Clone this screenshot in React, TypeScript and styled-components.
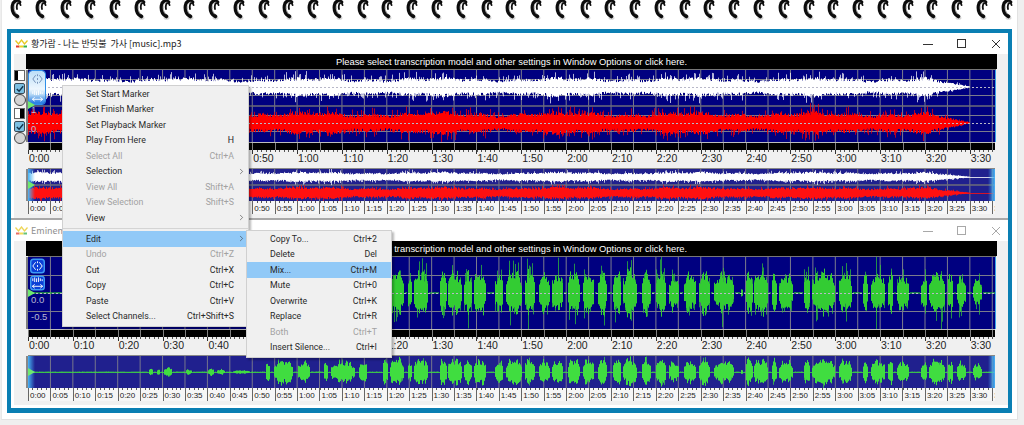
import { FC } from 'react';
import styled, { createGlobalStyle } from 'styled-components';
import { ChevronRight } from 'lucide-react';

const PLOT_WIDTH = 967;
const SEC_PX = 4.485;
const UI_FONT = `"Liberation Sans", "Noto Sans CJK KR", sans-serif`;

type Envelope = (x: number) => number;

const random = (seed: number) => () => {
    seed = (seed + 0x6d2b79f5) | 0;
    let t = Math.imul(seed ^ (seed >>> 15), 1 | seed);
    t = (t + Math.imul(t ^ (t >>> 7), 61 | t)) ^ t;
    return ((t ^ (t >>> 14)) >>> 0) / 4294967296;
};

// x ranges read off the screenshot, [from, to, level]
const SONG_BURSTS: [number, number, number][] = [
    [148, 153, .3], [156, 160, .25], [163, 172, .35], [185, 192, .2], [207, 214, .3], [216, 225, .2], [232, 250, .13],
    [265, 270, .8], [273, 293, 1], [297, 310, .75], [323, 328, .8], [330, 355, .85], [358, 367, .8], [382, 388, 1],
    [389, 404, 1], [407, 412, .7], [413, 428, 1], [439, 447, 1], [447, 462, 1], [463, 472, .9], [473, 486, 1],
    [494, 503, .85], [505, 522, 1], [524, 535, 1], [538, 550, .9], [551, 563, .9], [567, 580, 1], [582, 594, .95],
    [597, 607, 1], [612, 621, 1], [622, 637, 1.05], [641, 651, 1], [655, 666, 1], [668, 679, .8], [683, 696, .9],
    [698, 710, 1], [713, 734, .85], [740, 743, .2], [745, 753, 1], [753, 768, 1], [771, 777, .9], [778, 793, .85],
    [803, 810, .9], [811, 835, 1], [838, 852, .9], [862, 868, .85], [870, 885, .9], [887, 893, .9], [896, 909, .8],
    [920, 927, .7], [928, 945, 1], [947, 953, .85], [956, 966, .75], [972, 982, .6],
];

const songEnvelope: Envelope = (x) => {
    const px = x + 28;
    for (const [from, to, level] of SONG_BURSTS) {
        if (px >= from && px <= to) {
            const t = (px - from) / (to - from);
            const ripple = .66 + .34 * Math.abs(Math.sin(px * .83) * Math.cos(px * .37));
            return level * Math.pow(Math.sin(Math.PI * t), .4) * ripple;
        }
    }
    return .02;
};

const musicEnvelope: Envelope = (x) => {
    const body = .82 + .12 * Math.sin(x * .05) + .08 * Math.sin(x * .17);
    if (x < 900) return body;
    if (x < 942) return body * (1 - (x - 900) / 42) * .9 + .04;
    return 0;
};

const bars = (center: number, env: Envelope, amp: number, seed: number) => {
    const rnd = random(seed);
    let d = '';
    for (let x = 0; x < PLOT_WIDTH; x += 1) {
        const up = env(x) * amp * (.7 + rnd() * .4);
        const down = env(x) * amp * (.7 + rnd() * .4);
        if (up + down > .2) d += `M${x + .5} ${(center - up).toFixed(1)}V${(center + down).toFixed(1)}`;
    }
    return d;
};

const spikes = (center: number, env: Envelope, amp: number, seed: number) => {
    const rnd = random(seed);
    let d = '';
    for (let x = 0; x < PLOT_WIDTH; x += 1) {
        const r1 = rnd();
        const r2 = rnd();
        const up = env(x) * amp * (.3 + Math.pow(r1, 4) * .8 + r2 * .12);
        const down = env(x) * amp * (.3 + Math.pow(r2, 4) * .8 + r1 * .12);
        if (up + down > .4) d += `M${x + .5} ${(center - up).toFixed(1)}V${(center + down).toFixed(1)}`;
    }
    return d;
};

type Channel = {
    center: number;
    env: Envelope;
    color: string;
    core: number;
    spike: number;
    seed: number;
    lines?: number;
};

const PlotGraph: FC<{ height: number; channels: Channel[]; step: number; divider?: number; grid: string; dotted?: boolean }> = ({ height, channels, step, divider, grid, dotted }) => {
    const verticals: number[] = [];
    for (let x = step; x < PLOT_WIDTH; x += step) verticals.push(x);
    return (
        <svg width={PLOT_WIDTH} height={height} style={{ display: 'block' }}>
            {verticals.map((x) => <line key={x} x1={x} x2={x} y1={0} y2={height} stroke={grid} />)}
            {channels.map((c) => c.lines ? (
                <g key={c.seed} stroke={grid}>
                    <line x1={0} x2={PLOT_WIDTH} y1={c.center - c.lines + .5} y2={c.center - c.lines + .5} />
                    <line x1={0} x2={PLOT_WIDTH} y1={c.center + c.lines + .5} y2={c.center + c.lines + .5} />
                </g>
            ) : null)}
            {divider ? <line x1={0} x2={PLOT_WIDTH} y1={divider} y2={divider} stroke="#6c6c78" strokeWidth={1.5} /> : null}
            {channels.map((c) => (
                <g key={c.seed} stroke={c.color} fill="none">
                    <path d={spikes(c.center, c.env, c.spike, c.seed + 7)} opacity={.7} />
                    <path d={bars(c.center, c.env, c.core, c.seed)} />
                    {dotted
                        ? <line x1={0} x2={PLOT_WIDTH} y1={c.center + .5} y2={c.center + .5} stroke="#b8b8c8" strokeDasharray="2 2" />
                        : <line x1={0} x2={PLOT_WIDTH} y1={c.center + .5} y2={c.center + .5} opacity={.8} />}
                </g>
            ))}
        </svg>
    );
};

const ZoomGlyph: FC<{ wash?: boolean; kind: 'h' | 'v' }> = ({ wash, kind }) => (
    <svg width="15" height="16" viewBox="0 0 16 16" style={{ display: 'block' }}>
        {!wash && <rect x=".75" y=".75" width="14.5" height="14.5" rx="3" fill="#0b3fd6" stroke="#3d9bf5" strokeWidth="1.5" />}
        {kind === 'h' ? (
            <g stroke={wash ? '#6f8db4' : '#fff'} strokeWidth="1" fill="none">
                <path d="M6 4 3 8l3 4M10 4l3 4-3 4" />
                <path d="M8 3v2M8 7v2M8 11v2" />
            </g>
        ) : (
            <g stroke="#fff" strokeWidth="1" fill="none">
                <path d="M3 3v3M5 2v5M7 3v4M9 2v5M11 3v3M13 4v2" />
                <path d="M2.5 11.5h11M5 9.5l-2.5 2 2.5 2M11 9.5l2.5 2-2.5 2" />
            </g>
        )}
    </svg>
);

const Crown: FC<{ dim?: boolean }> = ({ dim }) => (
    <svg width="13" height="10" viewBox="0 0 13 10" style={{ display: 'block', opacity: dim ? .75 : 1 }}>
        <path d="M.5 1.5 3.5 5 6.5 1l3 4 3-3.5" fill="none" stroke="#e8c820" strokeWidth="1.3" />
        <path d="M1 7.5h3.5" stroke="#e23b2e" strokeWidth="2" />
        <path d="M4.5 7.5h4" stroke="#f0d020" strokeWidth="2" />
        <path d="M8.5 7.5H12" stroke="#35b04a" strokeWidth="2" />
    </svg>
);

const Ring: FC = () => (
    <svg width="13" height="20" viewBox="0 0 13 20" style={{ display: 'block', flex: 'none' }}>
        <ellipse cx="7.5" cy="18" rx="3" ry="1.8" fill="#d6d6d6" />
        <path d="M9.4 2.2C6.2.2 3 1.4 2.6 5.6c-.5 4.2.8 8.6 4.8 10.8" fill="none" stroke="#0c0c0c" strokeWidth="3.8" strokeLinecap="round" />
        <path d="M8.6 2.4C6.4 1.8 4.7 3.2 4.3 6c-.4 3 .3 6.2 2.4 8.2" fill="none" stroke="#dcdcdc" strokeWidth=".8" />
        <path d="M7 9c-.7-3.2.1-5.8 1.8-5.8 1 0 1.6.7 1.8 2" fill="none" stroke="#111" strokeWidth="1.8" strokeLinecap="round" />
    </svg>
);

type MenuRow = { label: string; keys?: string; off?: boolean; sub?: boolean; on?: boolean };

const MAIN_TOP: MenuRow[] = [
    { label: 'Set Start Marker' },
    { label: 'Set Finish Marker' },
    { label: 'Set Playback Marker' },
    { label: 'Play From Here', keys: 'H' },
    { label: 'Select All', keys: 'Ctrl+A', off: true },
    { label: 'Selection', sub: true },
    { label: 'View All', keys: 'Shift+A', off: true },
    { label: 'View Selection', keys: 'Shift+S', off: true },
    { label: 'View', sub: true },
];

const MAIN_BOTTOM: MenuRow[] = [
    { label: 'Edit', sub: true, on: true },
    { label: 'Undo', keys: 'Ctrl+Z', off: true },
    { label: 'Cut', keys: 'Ctrl+X' },
    { label: 'Copy', keys: 'Ctrl+C' },
    { label: 'Paste', keys: 'Ctrl+V' },
    { label: 'Select Channels...', keys: 'Ctrl+Shift+S' },
];

const EDIT_ROWS: MenuRow[] = [
    { label: 'Copy To...', keys: 'Ctrl+2' },
    { label: 'Delete', keys: 'Del' },
    { label: 'Mix...', keys: 'Ctrl+M', on: true },
    { label: 'Mute', keys: 'Ctrl+0' },
    { label: 'Overwrite', keys: 'Ctrl+K' },
    { label: 'Replace', keys: 'Ctrl+R' },
    { label: 'Both', keys: 'Ctrl+T', off: true },
    { label: 'Insert Silence...', keys: 'Ctrl+I' },
];

const MenuRows: FC<{ rows: MenuRow[] }> = ({ rows }) => (
    <>
        {rows.map((r) => (
            <MenuItem key={r.label} $off={r.off} $on={r.on}>
                <span>{r.label}</span>
                <MenuKeys>{r.keys}</MenuKeys>
                <MenuArrow>{r.sub ? <ChevronRight size={9} strokeWidth={1.5} /> : null}</MenuArrow>
            </MenuItem>
        ))}
    </>
);

const timeLabel = (sec: number) => `${Math.floor(sec / 60)}:${String(sec % 60).padStart(2, '0')}`;

const MAJOR = Array.from({ length: 22 }, (_, i) => timeLabel(i * 10));
const MINOR = Array.from({ length: 44 }, (_, i) => timeLabel(i * 5));

const Controls: FC<{ left: boolean }> = ({ left }) => (
    <ControlGroup>
        <Swatch $left={left} />
        <CheckBox>
            <svg width="10" height="10" viewBox="0 0 11 11" style={{ display: 'block' }}><path d="M2 5.5 4.5 8 9 2.5" fill="none" stroke="#12324a" strokeWidth="1.5" /></svg>
        </CheckBox>
        <Radio />
    </ControlGroup>
);

type TrackProps = {
    title: string;
    dim?: boolean;
    controls?: boolean;
    main: Channel[];
    over: Channel[];
    divider?: number;
    overDivider?: number;
    music?: boolean;
};

const Track: FC<TrackProps> = ({ title, dim, controls, main, over, divider, overDivider, music }) => (
    <Window>
        <TitleBar $dim={dim}>
            <Crown dim={dim} />
            <TitleText>{title}</TitleText>
            <WindowButtons $dim={dim}>
                <svg width="10" height="10" viewBox="0 0 10 10"><path d="M0 5.5h10" stroke="currentColor" /></svg>
                <svg width="10" height="10" viewBox="0 0 10 10"><rect x=".5" y=".5" width="8" height="8" fill="none" stroke="currentColor" /></svg>
                <svg width="10" height="10" viewBox="0 0 10 10"><path d="M1 1l8 8M9 1 1 9" stroke="currentColor" /></svg>
            </WindowButtons>
        </TitleBar>
        <WindowBody>
            <SideColumn>
                {controls ? (
                    <>
                        <Controls left />
                        <Controls left={false} />
                    </>
                ) : null}
            </SideColumn>
            <MainColumn>
                <Banner>Please select transcription model and other settings in Window Options or click here.</Banner>
                <Plot>
                    <PlotGraph height={72} channels={main} step={SEC_PX * 5} divider={divider} grid="#7b7b8c" dotted />
                    {music ? (
                        <WashPanel>
                            <ZoomGlyph wash kind="h" />
                            <ZoomGlyph wash kind="v" />
                        </WashPanel>
                    ) : (
                        <ButtonStack>
                            <ZoomGlyph kind="h" />
                            <ZoomGlyph kind="v" />
                        </ButtonStack>
                    )}
                    <PlayHead $top={music ? 31 : 32} />
                    {music ? (
                        <>
                            <AxisLabel $top={35}>1</AxisLabel>
                            <AxisLabel $top={54}>0</AxisLabel>
                        </>
                    ) : (
                        <>
                            <AxisLabel $top={38}>0.0</AxisLabel>
                            <AxisLabel $top={55}>-0.5</AxisLabel>
                        </>
                    )}
                </Plot>
                <BlackBand />
                <MajorRuler>
                    {MAJOR.map((t) => <MajorLabel key={t}>{t}</MajorLabel>)}
                </MajorRuler>
                <Overview>
                    <PlotGraph height={32} channels={over} step={SEC_PX * 5} divider={overDivider} grid="#76768c" />
                    <EdgeFade $side="left" />
                    <EdgeFade $side="right" />
                    <PlayHead $top={12} />
                </Overview>
                <MinorRuler>
                    {MINOR.map((t) => <MinorLabel key={t}>{t}</MinorLabel>)}
                </MinorRuler>
            </MainColumn>
        </WindowBody>
    </Window>
);

export default function App() {
    return (
        <>
            <GlobalStyle />
            <Sheet>
                <RingRow>
                    {Array.from({ length: 41 }, (_, i) => <Ring key={i} />)}
                </RingRow>
                <Frame>
                    <Track
                        title="황가람 - 나는 반딧불  가사 [music].mp3"
                        controls
                        music
                        divider={36}
                        overDivider={16}
                        main={[
                            { center: 17, env: musicEnvelope, color: '#ffffff', core: 9.5, spike: 15, seed: 11, lines: 8 },
                            { center: 53, env: musicEnvelope, color: '#ff0000', core: 11, spike: 17, seed: 23, lines: 8 },
                        ]}
                        over={[
                            { center: 8, env: musicEnvelope, color: '#ffffff', core: 5, spike: 7, seed: 31 },
                            { center: 24, env: musicEnvelope, color: '#ff1010', core: 6, spike: 8, seed: 37 },
                        ]}
                    />
                    <Separator />
                    <Track
                        title="Eminem"
                        dim
                        main={[{ center: 36, env: songEnvelope, color: '#33cc33', core: 25, spike: 40, seed: 41, lines: 18 }]}
                        over={[{ center: 16, env: songEnvelope, color: '#40dd40', core: 15, spike: 15, seed: 43 }]}
                    />
                    <MenuPanel $left={51} $top={52} $width={187}>
                        <MenuRows rows={MAIN_TOP} />
                        <MenuDivider />
                        <MenuRows rows={MAIN_BOTTOM} />
                    </MenuPanel>
                    <MenuPanel $left={235} $top={197} $width={146}>
                        <MenuRows rows={EDIT_ROWS} />
                    </MenuPanel>
                </Frame>
            </Sheet>
        </>
    );
}

const GlobalStyle = createGlobalStyle`
    html, body {
        margin: 0;
        padding: 0;
        background: #efefef;
        overflow: hidden;
    }
    body {
        width: 1024px;
        height: 425px;
        font-family: ${UI_FONT};
    }
`;

const Sheet = styled.div`
    position: relative;
    box-sizing: border-box;
    width: 1017px;
    height: 420px;
    margin-left: 1px;
    padding: 29px 5px 0 5px;
    background: #fff;
    border-right: 1px solid #e2e2e2;
    border-bottom: 1px solid #e2e2e2;
    border-left: 1px solid #e8e8e8;
`;

const RingRow = styled.div`
    position: absolute;
    top: 0;
    left: 8px;
    display: flex;
    gap: 11.78px;
`;

const Frame = styled.div`
    position: relative;
    box-sizing: border-box;
    width: 1005px;
    height: 384px;
    background: #fff;
    border: 4px solid #0a7fb3;
    border-bottom-width: 5px;
`;

const Window = styled.div`
    background: #fff;
`;

const Separator = styled.div`
    height: 2px;
    background: #a8a8a8;
`;

const TitleBar = styled.div<{ $dim?: boolean }>`
    display: flex;
    align-items: center;
    height: 21px;
    padding-left: 4px;
    color: ${(p) => (p.$dim ? '#8e8e8e' : '#222')};
`;

const TitleText = styled.div`
    margin-left: 3px;
    font-family: "Noto Sans CJK KR", "Liberation Sans", sans-serif;
    font-size: 9px;
    white-space: pre;
`;

const WindowButtons = styled.div<{ $dim?: boolean }>`
    display: flex;
    gap: 24px;
    margin-left: auto;
    padding-right: 7px;
    color: ${(p) => (p.$dim ? '#a8a8a8' : '#333')};
`;

const WindowBody = styled.div`
    display: flex;
    margin-left: 3px;
    padding-bottom: 4px;
    background: #f0f0f0;
`;

const SideColumn = styled.div`
    display: flex;
    flex-direction: column;
    gap: 2px;
    flex: none;
    width: 12px;
    padding-top: 16px;
`;

const ControlGroup = styled.div`
    display: flex;
    flex-direction: column;
    height: 36px;
`;

const Swatch = styled.div<{ $left: boolean }>`
    box-sizing: border-box;
    width: 11px;
    height: 11px;
    margin-bottom: 2px;
    border: 1px solid #666;
    background: ${(p) => (p.$left
        ? 'linear-gradient(90deg, #000 0 35%, #fff 35%)'
        : 'linear-gradient(90deg, #fff 0 60%, #000 60%)')};
`;

const CheckBox = styled.div`
    box-sizing: border-box;
    width: 11px;
    height: 11px;
    background: #7cc0e2;
    border: 1px solid #3c4c58;
    border-radius: 2px;
`;

const Radio = styled.div`
    box-sizing: border-box;
    width: 12px;
    height: 12px;
    background: #d4d4d4;
    border: 1px solid #444;
    border-radius: 50%;
`;

const MainColumn = styled.div`
    width: 971px;
    overflow: hidden;
`;

const Banner = styled.div`
    height: 15px;
    margin-bottom: 1px;
    color: #fff;
    background: #000;
    font-size: 9.4px;
    line-height: 15px;
    text-align: center;
`;

const Plot = styled.div`
    position: relative;
    width: ${PLOT_WIDTH}px;
    height: 72px;
    margin-left: 2px;
    background: #000080;
    box-shadow: -2px 0 0 #808080, 0 -1px 0 #777;
    border-right: 1px solid #3aa3e8;
`;

const WashPanel = styled.div`
    position: absolute;
    top: 1px;
    left: 1px;
    display: flex;
    flex-direction: column;
    justify-content: space-between;
    align-items: center;
    width: 16px;
    height: 33px;
    background: linear-gradient(#bcdff8, #eef7fe 55%, #bcdcf6 70%, #2f82e4 95%);
    border-radius: 3px;
    outline: 1px solid #2f8fe8;
`;

const ButtonStack = styled.div`
    position: absolute;
    top: 1px;
    left: 2px;
    display: flex;
    flex-direction: column;
    gap: 1px;
`;

const PlayHead = styled.div<{ $top: number }>`
    position: absolute;
    top: ${(p) => p.$top}px;
    left: 0;
    width: 0;
    height: 0;
    border-top: 4px solid transparent;
    border-bottom: 4px solid transparent;
    border-left: 7px solid #6fe86f;
`;

const AxisLabel = styled.div<{ $top: number }>`
    position: absolute;
    top: ${(p) => p.$top}px;
    left: 3px;
    color: #b8b8d4;
    font-size: 9.5px;
    line-height: 10px;
`;

const BlackBand = styled.div`
    width: ${PLOT_WIDTH}px;
    height: 7px;
    margin-left: 2px;
    border-top: 1px solid #bdbdbd;
    background:
        repeating-linear-gradient(90deg, #808080 0 1px, transparent 1px ${SEC_PX * 5}px),
        #000;
`;

const MajorRuler = styled.div`
    display: flex;
    width: ${PLOT_WIDTH}px;
    height: 14px;
    margin-left: 2px;
    margin-bottom: 5px;
    overflow: hidden;
    background:
        repeating-linear-gradient(90deg, #333 0 1px, transparent 1px ${SEC_PX * 10}px) 0 0 / 100% 4px no-repeat,
        repeating-linear-gradient(90deg, #555 0 1px, transparent 1px ${SEC_PX}px) 0 0 / 100% 2px no-repeat;
`;

const MajorLabel = styled.div`
    flex: none;
    box-sizing: border-box;
    width: ${SEC_PX * 10}px;
    padding: 3px 0 0 1px;
    color: #222;
    font-size: 10.5px;
    line-height: 11px;
    white-space: nowrap;
`;

const Overview = styled.div`
    position: relative;
    width: ${PLOT_WIDTH}px;
    height: 32px;
    margin-left: 2px;
    background: #20208e;
    box-shadow: -2px 0 0 #888, 0 -1px 0 #888;
`;

const EdgeFade = styled.div<{ $side: 'left' | 'right' }>`
    position: absolute;
    top: 0;
    ${(p) => p.$side}: 0;
    width: 7px;
    height: 100%;
    background: linear-gradient(${(p) => (p.$side === 'left' ? '90deg' : '270deg')}, #48b4f4, rgba(72, 180, 244, 0));
`;

const MinorRuler = styled.div`
    display: flex;
    width: ${PLOT_WIDTH}px;
    height: 13px;
    margin-left: 2px;
    overflow: hidden;
    background:
        repeating-linear-gradient(90deg, #555 0 1px, transparent 1px ${SEC_PX}px) 0 0 / 100% 2px no-repeat,
        #f6f6f6;
`;

const MinorLabel = styled.div`
    flex: none;
    box-sizing: border-box;
    width: ${SEC_PX * 5}px;
    padding: 3px 0 0 1px;
    border-left: 1px solid #666;
    color: #222;
    font-size: 8px;
    line-height: 9px;
    white-space: nowrap;
    overflow: hidden;
`;

const MenuPanel = styled.div<{ $left: number; $top: number; $width: number }>`
    position: absolute;
    top: ${(p) => p.$top}px;
    left: ${(p) => p.$left}px;
    box-sizing: border-box;
    width: ${(p) => p.$width}px;
    padding-bottom: 2px;
    background: #f0f0f0;
    border: 1px solid #d0d0d0;
    box-shadow: 2px 2px 2px rgba(0, 0, 0, .28);
`;

const MenuItem = styled.div<{ $off?: boolean; $on?: boolean }>`
    display: flex;
    align-items: center;
    height: 15.5px;
    padding-left: 23px;
    color: ${(p) => (p.$off ? '#a2a2a2' : '#2a2a2a')};
    background: ${(p) => (p.$on ? '#91c9f7' : 'transparent')};
    font-family: Roboto, "Liberation Sans", sans-serif;
    font-size: 8.8px;
    white-space: nowrap;
`;

const MenuKeys = styled.span`
    margin-left: auto;
`;

const MenuArrow = styled.span`
    display: flex;
    justify-content: center;
    width: 14px;
    color: #333;
`;

const MenuDivider = styled.div`
    height: 1px;
    margin: 2.5px 0 2px;
    background: #d4d4d4;
`;
